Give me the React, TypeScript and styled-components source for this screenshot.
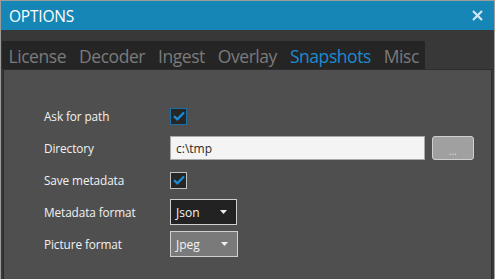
import React from "react";
import styled, { createGlobalStyle } from "styled-components";

const Global = createGlobalStyle`
  html, body { margin: 0; padding: 0; background: #383838; }
  body { font-family: "Open Sans", "Noto Sans", sans-serif; }
  * { box-sizing: border-box; }
`;

const Window = styled.div`
  width: 495px;
  height: 279px;
  border: 1px solid #9c9c9c;
  border-bottom: none;
  background: #383838;
  display: flex;
  flex-direction: column;
  overflow: hidden;
`;

const TitleBar = styled.div`
  height: 29px;
  flex: none;
  background: #1686b6;
  display: flex;
  align-items: center;
  justify-content: space-between;
  padding: 0 11px 0 8px;
`;

const Title = styled.div`
  color: #ffffff;
  font-size: 15.5px;
  letter-spacing: -0.2px;
  font-weight: 400;
`;

const Close = styled.div`
  width: 11px;
  height: 11px;
  display: flex;
  align-items: center;
  justify-content: center;
`;

const Body = styled.div`
  flex: 1;
  display: flex;
  flex-direction: column;
  padding: 11px 1px 0 1px;
`;

const TabStrip = styled.div`
  align-self: flex-start;
  display: flex;
  background: #252525;
  height: 28px;
  align-items: center;
`;

const Tab = styled.div<{ $active?: boolean }>`
  padding: 0 6.5px;
  font-size: 17.5px;
  letter-spacing: -0.45px;
  color: ${(p) => (p.$active ? "#1b8bd2" : "#7b7b7b")};
  line-height: 28px;
  margin-top: 1px;
`;

const Panel = styled.div`
  flex: 1;
  background: #4f4f4f;
  border: 1px solid #2c2c2c;
  border-bottom: none;
  margin: 0 1px;
  padding: 30px 0 0 40px;
  display: flex;
  flex-direction: column;
`;

const Row = styled.div`
  display: grid;
  grid-template-columns: 126px auto;
  align-items: center;
  height: 32px;
`;

const Label = styled.div`
  color: #f2f2f2;
  font-size: 11.8px;
  letter-spacing: -0.1px;
`;

const Control = styled.div`
  display: flex;
  align-items: center;
  gap: 7px;
`;

const Check = styled.div<{ $focus?: boolean }>`
  width: 17px;
  height: 17px;
  background: #262626;
  border: 1px solid ${(p) => (p.$focus ? "#1a6fa6" : "#c0c0c0")};
  display: flex;
  align-items: center;
  justify-content: center;
`;

const TextInput = styled.div`
  width: 255px;
  height: 24px;
  background: #f4f4f4;
  border: 1px solid #a9a9a9;
  color: #2a2a2a;
  font-size: 12px;
  padding-left: 5px;
  display: flex;
  align-items: center;
`;

const Browse = styled.div`
  width: 42px;
  height: 24px;
  background: #a0a0a0;
  border: 1px solid #cfcfcf;
  border-radius: 3px;
  color: #dedede;
  font-size: 10px;
  display: flex;
  align-items: flex-end;
  justify-content: center;
  padding-bottom: 3px;
  line-height: 10px;
`;

const Select = styled.div<{ $bg: string; $w: number }>`
  width: ${(p) => p.$w}px;
  height: 26px;
  background: ${(p) => p.$bg};
  border: 1px solid #cfcfcf;
  color: #f4f4f4;
  font-size: 12px;
  display: flex;
  align-items: center;
  justify-content: space-between;
  padding: 0 9px 0 5px;
`;

const CheckMark = () => (
  <svg width="12" height="10" viewBox="0 0 12 10">
    <path d="M1 5.2 L4.3 8.3 L11 1.5" fill="none" stroke="#1b8bd2" strokeWidth="2.4" />
  </svg>
);

const Arrow = () => (
  <svg width="7" height="4" viewBox="0 0 7 4">
    <path d="M0 0 H7 L3.5 4 Z" fill="#f0f0f0" />
  </svg>
);

export default function App() {
  const tabs = ["License", "Decoder", "Ingest", "Overlay", "Snapshots", "Misc"];
  return (
    <>
      <Global />
      <Window>
        <TitleBar>
          <Title>OPTIONS</Title>
          <Close>
            <svg width="11" height="11" viewBox="0 0 11 11">
              <path d="M1 1 L10 10 M10 1 L1 10" stroke="#d2e8f3" strokeWidth="2.2" />
            </svg>
          </Close>
        </TitleBar>
        <Body>
          <TabStrip>
            {tabs.map((t) => (
              <Tab key={t} $active={t === "Snapshots"}>
                {t}
              </Tab>
            ))}
          </TabStrip>
          <Panel>
            <Row>
              <Label>Ask for path</Label>
              <Control>
                <Check $focus>
                  <CheckMark />
                </Check>
              </Control>
            </Row>
            <Row>
              <Label>Directory</Label>
              <Control>
                <TextInput>c:\tmp</TextInput>
                <Browse>...</Browse>
              </Control>
            </Row>
            <Row>
              <Label>Save metadata</Label>
              <Control>
                <Check>
                  <CheckMark />
                </Check>
              </Control>
            </Row>
            <Row>
              <Label>Metadata format</Label>
              <Control>
                <Select $bg="#222222" $w={67}>
                  <span>Json</span>
                  <Arrow />
                </Select>
              </Control>
            </Row>
            <Row>
              <Label>Picture format</Label>
              <Control>
                <Select $bg="#7a7a7a" $w={68}>
                  <span>Jpeg</span>
                  <Arrow />
                </Select>
              </Control>
            </Row>
          </Panel>
        </Body>
      </Window>
    </>
  );
}
